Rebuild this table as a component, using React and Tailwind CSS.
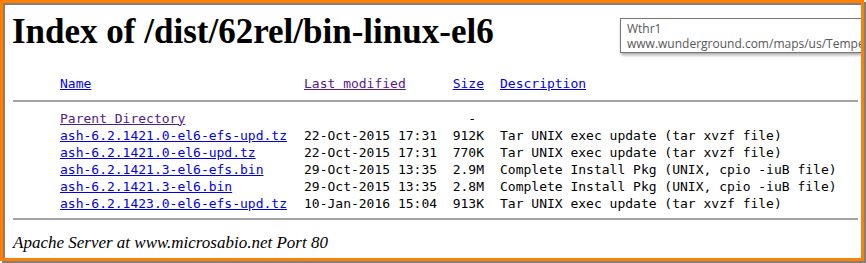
import React from "react";

const rows = [
  { name: "ash-6.2.1421.0-el6-efs-upd.tz", date: "22-Oct-2015 17:31", size: "912K", desc: "Tar UNIX exec update (tar xvzf file)" },
  { name: "ash-6.2.1421.0-el6-upd.tz", date: "22-Oct-2015 17:31", size: "770K", desc: "Tar UNIX exec update (tar xvzf file)" },
  { name: "ash-6.2.1421.3-el6-efs.bin", date: "29-Oct-2015 13:35", size: "2.9M", desc: "Complete Install Pkg (UNIX, cpio -iuB file)" },
  { name: "ash-6.2.1421.3-el6.bin", date: "29-Oct-2015 13:35", size: "2.8M", desc: "Complete Install Pkg (UNIX, cpio -iuB file)" },
  { name: "ash-6.2.1423.0-el6-efs-upd.tz", date: "10-Jan-2016 15:04", size: "913K", desc: "Tar UNIX exec update (tar xvzf file)" },
];

export default function App() {
  return (
    <div className="relative w-[866px] h-[263px] bg-white overflow-hidden">
      <div className="flex flex-col pl-[13px] pr-[8px] pt-[14px]">
        <h1 className="ml-[-1px] text-[35px] leading-[35px] font-bold text-black whitespace-nowrap [font-family:'Liberation_Serif',serif]">
          Index of /dist/62rel/bin-linux-el6
        </h1>
        <div className="mt-[26px] flex flex-col text-[13px] [font-family:'DejaVu_Sans_Mono',monospace] whitespace-pre">
          <div className="flex h-[17px] items-center">
            <div className="w-[47px]" />
            <div className="w-[244px]"><span className="underline text-[#0000ee]">Name</span></div>
            <div className="w-[140px]"><span className="underline text-[#551a8b]">Last modified</span></div>
            <div className="w-[40px] text-right"><span className="underline text-[#0000ee]">Size</span></div>
            <div className="pl-[16px]"><span className="underline text-[#0000ee]">Description</span></div>
          </div>
          <div className="mt-[8px] h-[2px] bg-[#a4a4a4]" />
          <div className="mt-[8px] flex h-[17px] items-center">
            <div className="w-[47px]" />
            <div className="w-[244px]"><span className="underline text-[#551a8b]">Parent Directory</span></div>
            <div className="w-[140px]" />
            <div className="w-[40px] text-right text-black">{"- "}</div>
            <div className="pl-[16px]" />
          </div>
          {rows.map((r) => (
            <div key={r.name} className="flex h-[17px] items-center text-black">
              <div className="w-[47px]" />
              <div className="w-[244px]"><span className="underline text-[#0000ee]">{r.name}</span></div>
              <div className="w-[140px]">{r.date}</div>
              <div className="w-[40px] text-right">{r.size}</div>
              <div className="pl-[16px]">{r.desc}</div>
            </div>
          ))}
          <div className="mt-[6px] h-[2px] bg-[#a4a4a4]" />
        </div>
        <div className="mt-[12px] text-[17px] leading-[22px] italic text-black [font-family:'Liberation_Serif',serif]">
          Apache Server at www.microsabio.net Port 80
        </div>
      </div>

      <div className="absolute left-[620px] top-[18px] w-[300px] h-[35px] bg-white border border-[#767676] shadow-[1px_2px_3px_rgba(0,0,0,0.35)] px-[6px] pt-[2px] text-[12px] leading-[15px] text-[#575757] whitespace-nowrap [font-family:'Open_Sans',sans-serif]">
        <div className="h-[15px]">Wthr1</div>
        <div className="h-[15px]">www.wunderground.com/maps/us/Temperature.html</div>
      </div>

      <div className="pointer-events-none absolute left-0 top-0 w-[864px] h-[261px] border-[3px] border-[#ff8000] [filter:drop-shadow(2px_2px_0_#808080)]" />
    </div>
  );
}
